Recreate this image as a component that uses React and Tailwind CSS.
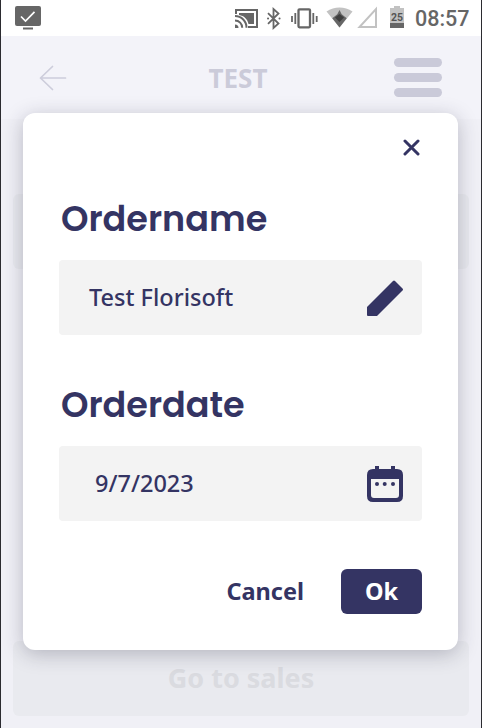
import React from "react";

function StatusBar() {
  return (
    <div className="flex h-9 shrink-0 items-start bg-white">
      <svg className="ml-[14px] mt-[6px] h-6 w-[26px]" viewBox="0 0 26 24">
        <rect width="26" height="20" rx="2" fill="#666" />
        <path d="M6 10.5l4.5 4.5L19.5 5.8" fill="none" stroke="#fff" strokeWidth="1.7" />
        <path d="M8 22.5h10" stroke="#666" strokeWidth="2" />
      </svg>
      <svg className="ml-[193px] h-9 w-[175px]" viewBox="234 0 175 36">
        <g fill="none" stroke="#666" strokeWidth="2">
          <path d="M236 14v-4h21v17h-9" />
          <path d="M235 16a11.5 11.5 0 0 1 11.5 11.8M235 20.4a7.2 7.2 0 0 1 7.2 7.4" />
        </g>
        <path d="M235 24.4a3.6 3.6 0 0 1 3.5 3.6H235z" fill="#666" />
        <path d="M239 13h15v11h-5.5c-1-5-4.500-8.300-9.500-9z" fill="#666" />
        <path d="M268 13.200l10.500 10.300-5 4.500V9l5 4.500L268 23.800" fill="none" stroke="#666" strokeWidth="1.800" />
        <path d="M268 18.500h.1M279.500 18.500h.1" stroke="#666" strokeWidth="2" strokeLinecap="round" />
        <rect x="298.500" y="9.300" width="11.500" height="18" rx="1" fill="none" stroke="#666" strokeWidth="2.300" />
        <path d="M295.300 13v11M292 16v6M313.300 13v11M316.700 16v6" stroke="#666" strokeWidth="1.800" />
        <path d="M326.500 11.500c8-5.500 18-5.500 26 0l-13 16z" fill="#c2c2c2" />
        <path d="M339.500 10l2.200 4.300 5 3.900-7.200 9.300-7.200-9.300 5-3.900z" fill="#666" />
        <path d="M339.500 14l4.500 3.500-4.500 4.500-4.500-4.500z" fill="#3e3e3e" />
        <path d="M376 9v18h-16.500z" fill="none" stroke="#c2c2c2" strokeWidth="2" />
        <path d="M394 6h6v2h4v15h-14V8h4z" fill="#c2c2c2" />
        <path d="M390 23h14v5h-14z" fill="#666" />
        <text x="397" y="20.800" textAnchor="middle" fontSize="10.500" fontWeight="700" fontFamily="Roboto, sans-serif" fill="#555">25</text>
      </svg>
      <span className="ml-[6px] mt-[5px] whitespace-nowrap font-[Roboto,sans-serif] text-[21.500px] font-medium leading-[28px] text-[#666]">08:57</span>
    </div>
  );
}

function Header() {
  return (
    <header className="flex h-[83px] shrink-0 items-center justify-between bg-[#f3f3f9] pl-[38px] pr-[39px]">
      <svg className="h-[26px] w-7" viewBox="39 65 28 26" fill="none" stroke="#cdcddb" strokeWidth="1.700" strokeLinecap="round" strokeLinejoin="round">
        <path d="M65.500 78H40.500M52.500 66.500L40.500 78l12 11.500" />
      </svg>
      <span className="ml-[15px] whitespace-nowrap text-[26px] font-bold leading-9 text-[#cbcbd9]">TEST</span>
      <div className="flex flex-col gap-[6px]">
        <span className="h-[9px] w-12 rounded-full bg-[#cacad9]" />
        <span className="h-[9px] w-12 rounded-full bg-[#cacad9]" />
        <span className="h-[9px] w-12 rounded-full bg-[#cacad9]" />
      </div>
    </header>
  );
}

function Title({ children }) {
  return (
    <h2 className="ml-[2px] whitespace-nowrap font-[Poppins,Inter,sans-serif] text-[35px] font-semibold leading-[50px] [font-feature-settings:'cv11']">
      {children}
    </h2>
  );
}

function Dialog() {
  return (
    <div className="absolute left-[22px] top-[113px] flex h-[537px] w-[435px] flex-col rounded-xl bg-white px-9 text-[#343463] shadow-[0_4px_20px_rgba(40,40,65,0.28)]">
      <svg className="ml-auto mt-[26px] h-[18px] w-[18px] shrink-0 -translate-x-[1px]" viewBox="0 0 18 18" fill="none" stroke="currentColor" strokeWidth="3" strokeLinecap="round">
        <path d="M2 2l13 13M15 2L2 15" />
      </svg>
      <div className="mt-[37px] h-[66px]">
        <Title>Ordername</Title>
      </div>
      <div className="flex h-[75px] items-center justify-between rounded bg-[#f3f3f3] pl-[30px] pr-[19px]">
        <span className="whitespace-nowrap text-[23.500px] font-medium">Test Florisoft</span>
        <svg className="h-9 w-9" viewBox="0 0 36 36" fill="currentColor">
          <path d="M0 27L26 1q1-1 2 0l7.500 7.500q1 1 0 2L10 36H1q-1 0-1-1z" />
        </svg>
      </div>
      <div className="mt-[45px] h-[66px]">
        <Title>Orderdate</Title>
      </div>
      <div className="flex h-[75px] items-center justify-between rounded bg-[#f3f3f3] pl-9 pr-[19px]">
        <span className="whitespace-nowrap text-[23.500px] font-medium">9/7/2023</span>
        <svg className="h-9 w-9" viewBox="0 0 36 36" fill="currentColor">
          <path fillRule="evenodd" d="M8 0h4v3h12V0h4v3h2q6 0 6 6v21q0 6-6 6H6q-6 0-6-6V9q0-6 6-6h2zM4 13v16q0 3 3 3h22q3 0 3-3V13z" />
          <circle cx="10" cy="18" r="2" />
          <circle cx="17.700" cy="18" r="2" />
          <circle cx="26" cy="18" r="2" />
        </svg>
      </div>
      <div className="mt-12 flex h-[45px] items-center justify-end gap-[37px] text-[23.500px] font-bold">
        <button className="whitespace-nowrap">Cancel</button>
        <button className="h-[45px] w-[81px] rounded-md bg-[#343463] text-white">Ok</button>
      </div>
    </div>
  );
}

export default function App() {
  return (
    <div className="relative flex h-[728px] w-[482px] flex-col overflow-hidden border-x border-[#2b2b30] bg-[#f0f0f6] font-['Noto_Sans',sans-serif]">
      <StatusBar />
      <Header />
      <main className="flex flex-1 flex-col justify-between px-3 pb-3 pt-[75px]">
        <div className="h-[75px] rounded-md bg-[#e9eaef]" />
        <div className="flex h-[75px] items-center justify-center rounded-md bg-[#e9eaef] text-[27px] font-bold text-[#dadbe0]">Go to sales</div>
      </main>
      <Dialog />
    </div>
  );
}
